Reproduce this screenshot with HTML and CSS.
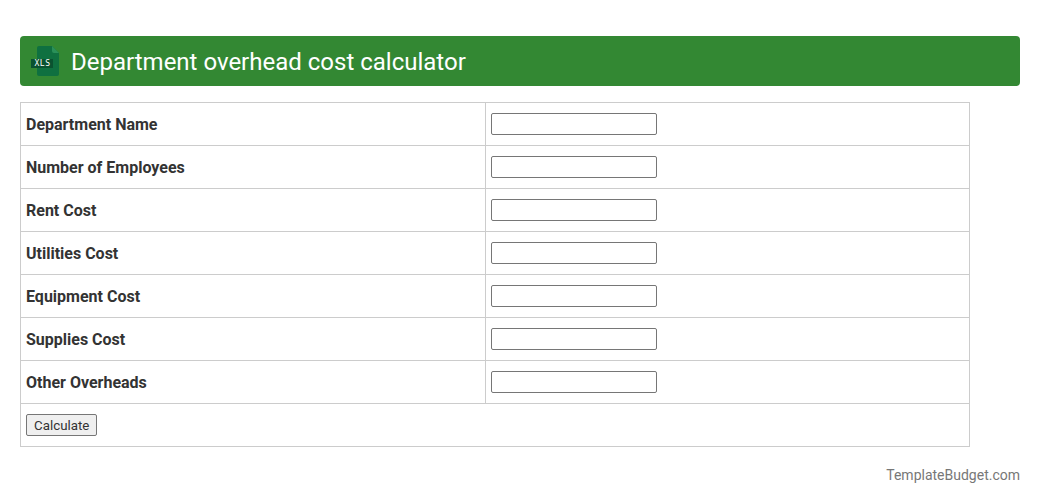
FILE: index.html
```html
<!DOCTYPE html>
<html lang="en">
<head>
    <meta charset="utf-8" />
    <title>Department overhead cost calculator</title>
    <link rel="stylesheet" href="styles.css">
</head>
<body>
    <div id="contents">
        <h1 class="banner">
            <svg class="xlsIcon" width="30" height="30" viewBox="0 0 30 30">
                <path d="M8 0H21L28 7V28a2 2 0 0 1-2 2H8a2 2 0 0 1-2-2V2a2 2 0 0 1 2-2z" fill="#0f7040"/>
                <path d="M21 0L28 7H23a2 2 0 0 1-2-2z" fill="#2a9058"/>
                <rect x="0" y="13" width="22" height="9" fill="#0a5230"/>
                <text x="11.500" y="20" class="xlsText" text-anchor="middle">XLS</text>
            </svg>
            <span class="bannerTitle">Department overhead cost calculator</span>
        </h1>

        <table class="calcTable">
            <tr><td class="labelCell">Department Name</td><td><input type="text" /></td></tr>
            <tr><td class="labelCell">Number of Employees</td><td><input type="text" /></td></tr>
            <tr><td class="labelCell">Rent Cost</td><td><input type="text" /></td></tr>
            <tr><td class="labelCell">Utilities Cost</td><td><input type="text" /></td></tr>
            <tr><td class="labelCell">Equipment Cost</td><td><input type="text" /></td></tr>
            <tr><td class="labelCell">Supplies Cost</td><td><input type="text" /></td></tr>
            <tr><td class="labelCell">Other Overheads</td><td><input type="text" /></td></tr>
            <tr><td colspan="2"><button type="button">Calculate</button></td></tr>
        </table>

        <div class="credit">TemplateBudget.com</div>
    </div>
</body>
</html>
```

FILE: styles.css
```css
body {
    margin: 0;
    font-family: Roboto, sans-serif;
    color: #333;
}

#contents {
    padding: 36px 20px 0;
}

.banner {
    display: flex;
    align-items: center;
    gap: 10px;
    height: 50px;
    margin: 0 0 16px;
    padding-left: 11px;
    background: #338833;
    border-radius: 4px;
    color: #fff;
    font-size: 24px;
    font-weight: 400;
}

.bannerTitle {
    padding-top: 2px;
}

.xlsIcon {
    flex: none;
}

.xlsText {
    font-family: "DejaVu Sans Mono", monospace;
    font-size: 8px;
    font-weight: 400;
    letter-spacing: 0.5px;
    fill: #fff;
}

.calcTable {
    width: 950px;
    border-collapse: collapse;
    table-layout: fixed;
    font-size: 16px;
}

.calcTable td {
    height: 42px;
    padding: 0 5px;
    border: 1px solid #ccc;
}

.labelCell {
    width: 454px;
    font-weight: 700;
}

.calcTable input {
    display: block;
    width: 166px;
    height: 22px;
    box-sizing: border-box;
    margin: 0;
    padding: 1px 2px;
    border: 1px solid #767676;
    border-radius: 2px;
    background: #fff;
}

.calcTable button {
    display: block;
    height: 22px;
    padding: 0 7px;
    border: 1px solid #767676;
    border-radius: 2px;
    background: #efefef;
    color: #333;
    font-family: Roboto, sans-serif;
    font-size: 13.33px;
}

.credit {
    margin-top: 20px;
    text-align: right;
    font-size: 14px;
    color: #777;
}
```
